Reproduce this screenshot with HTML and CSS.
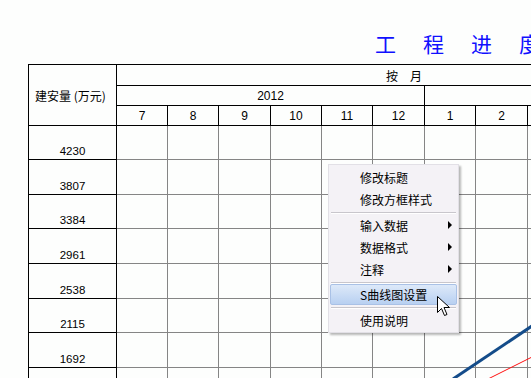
FILE: index.html
```html
<!DOCTYPE html>
<html lang="zh">
<head>
<meta charset="utf-8">
<title>工程进度</title>
<link rel="stylesheet" href="styles.css">
</head>
<body>
<div class="page">
  <h1 class="title">工程进度</h1>
  <div class="sheet">
    <div class="head-left">建安量 (万元)</div>
    <div class="head-by">按　月</div>
    <div class="head-year span6">2012</div>
    <div class="head-year span3"></div>
    <div class="m">7</div><div class="m">8</div><div class="m">9</div><div class="m">10</div><div class="m">11</div><div class="m">12</div><div class="m">1</div><div class="m">2</div><div class="m"></div>

    <div class="lab">4230</div><div class="c"></div><div class="c"></div><div class="c"></div><div class="c"></div><div class="c"></div><div class="c"></div><div class="c"></div><div class="c"></div><div class="c"></div>
    <div class="lab">3807</div><div class="c"></div><div class="c"></div><div class="c"></div><div class="c"></div><div class="c"></div><div class="c"></div><div class="c"></div><div class="c"></div><div class="c"></div>
    <div class="lab">3384</div><div class="c"></div><div class="c"></div><div class="c"></div><div class="c"></div><div class="c"></div><div class="c"></div><div class="c"></div><div class="c"></div><div class="c"></div>
    <div class="lab">2961</div><div class="c"></div><div class="c"></div><div class="c"></div><div class="c"></div><div class="c"></div><div class="c"></div><div class="c"></div><div class="c"></div><div class="c"></div>
    <div class="lab">2538</div><div class="c"></div><div class="c"></div><div class="c"></div><div class="c"></div><div class="c"></div><div class="c"></div><div class="c"></div><div class="c"></div><div class="c"></div>
    <div class="lab">2115</div><div class="c"></div><div class="c"></div><div class="c"></div><div class="c"></div><div class="c"></div><div class="c"></div><div class="c"></div><div class="c"></div><div class="c"></div>
    <div class="lab">1692</div><div class="c"></div><div class="c"></div><div class="c"></div><div class="c"></div><div class="c"></div><div class="c"></div><div class="c"></div><div class="c"></div><div class="c"></div>
    <div class="lab"></div><div class="c"></div><div class="c"></div><div class="c"></div><div class="c"></div><div class="c"></div><div class="c"></div><div class="c"></div><div class="c"></div><div class="c"></div>
  </div>

  <svg class="curves" width="531" height="378" viewBox="0 0 531 378">
    <line x1="453" y1="379" x2="532" y2="326" stroke="#144c8a" stroke-width="3"/>
    <line x1="489" y1="378.5" x2="532" y2="357" stroke="#ff1010" stroke-width="1"/>
  </svg>

  <div class="menu">
    <div class="item">修改标题</div>
    <div class="item">修改方框样式</div>
    <div class="sep"></div>
    <div class="item">输入数据<span class="arr"></span></div>
    <div class="item">数据格式<span class="arr"></span></div>
    <div class="item">注释<span class="arr"></span></div>
    <div class="sep"></div>
    <div class="item hot">S曲线图设置</div>
    <div class="sep"></div>
    <div class="item">使用说明</div>
  </div>

  <svg class="cursor" width="14" height="23" viewBox="0 0 14 23">
    <path d="M1.5 1.5 L1.5 17.5 L5.5 13.5 L8.5 20.5 L11 19.5 L8 12.5 L13.5 12.5 Z" fill="#fff" stroke="#000" stroke-width="1" stroke-linejoin="miter"/>
  </svg>
</div>
</body>
</html>
```

FILE: styles.css
```css
html, body {
  margin: 0;
  padding: 0;
  background: #fdfefd;
}
body {
  width: 531px;
  height: 378px;
  overflow: hidden;
  font-family: "Liberation Sans", "Noto Sans CJK SC", sans-serif;
  color: #000;
}
.page {
  position: relative;
  width: 531px;
  height: 378px;
  overflow: hidden;
}
.title {
  margin: 0;
  padding: 31px 0 0 375px;
  height: 33px;
  font-family: "Noto Sans CJK SC", sans-serif;
  font-weight: 400;
  font-size: 21px;
  line-height: 24px;
  letter-spacing: 27px;
  color: #1010ff;
  white-space: nowrap;
}
.sheet {
  margin-left: 28px;
  width: max-content;
  display: grid;
  grid-template-columns: 88px 51px 51px 52px 51px 51px 52px 51px 52px 51px;
  grid-template-rows: 21px 20px 20px 34px 35px 34px 35px 35px 34px 35px 35px;
  border-top: 1px solid #000;
  border-left: 1px solid #000;
}
.sheet > div {
  box-sizing: border-box;
  border-right: 1px solid #000;
  border-bottom: 1px solid #000;
  display: flex;
  align-items: center;
  justify-content: center;
  font-size: 12px;
  white-space: nowrap;
}
.head-left {
  grid-row: 1 / span 3;
  font-family: "Noto Sans CJK SC", sans-serif;
  padding-right: 4px;
}
.head-by {
  grid-column: 2 / span 9;
  justify-content: flex-start !important;
  padding-left: 269px;
  font-family: "Noto Sans CJK SC", sans-serif;
}
.span6 { grid-column: span 6; }
.span3 { grid-column: span 3; }
.m { padding-top: 1px; }
.sheet > .lab {
  align-items: flex-end;
  padding-bottom: 2px;
  font-size: 11.5px;
}
.sheet > .c {
  border-color: #858585;
}
.curves {
  position: absolute;
  left: 0;
  top: 0;
}
.menu {
  position: absolute;
  left: 328px;
  top: 164px;
  width: 131px;
  box-sizing: border-box;
  padding: 1px 0;
  background: #f4f2f6;
  border: 1px solid #e2e0e6;
  box-shadow: 2px 2px 2px rgba(0, 0, 0, 0.28);
  font-family: "Noto Sans CJK SC", sans-serif;
  font-size: 12px;
}
.item {
  height: 22px;
  display: flex;
  align-items: center;
  justify-content: space-between;
  padding: 0 6px 0 31px;
  box-sizing: border-box;
}
.arr {
  width: 0;
  height: 0;
  border-top: 4px solid transparent;
  border-bottom: 4px solid transparent;
  border-left: 4px solid #000;
}
.sep {
  height: 4px;
  margin: 0 2px;
  display: flex;
  align-items: center;
}
.sep::before {
  content: "";
  flex: 1;
  height: 1px;
  background: #c8c6cc;
  box-shadow: 0 1px 0 #fff;
}
.hot {
  height: 21px;
  margin: 0 1px;
  padding-left: 29px;
  border: 1px solid #a9c1e6;
  border-radius: 2px;
  background: linear-gradient(#dde9f9, #b8d0f1);
}
.cursor {
  position: absolute;
  left: 436px;
  top: 295px;
}
```
